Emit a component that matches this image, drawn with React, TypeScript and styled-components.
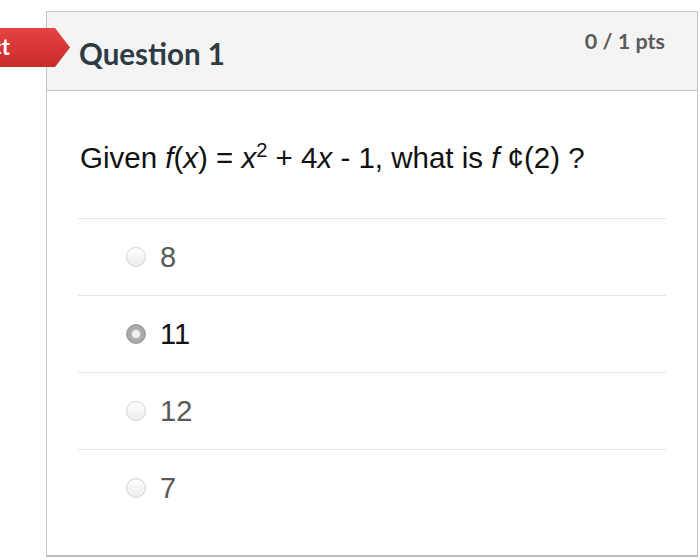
import React from "react";
import styled, { createGlobalStyle } from "styled-components";

const Global = createGlobalStyle`
  html, body { margin: 0; padding: 0; background: #ffffff; }
  body { width: 700px; height: 560px; overflow: hidden; }
`;

const Page = styled.div`
  position: relative;
  padding: 11px 0 0 46px;
`;

const Card = styled.div`
  box-sizing: border-box;
  width: 652px;
  height: 546px;
  border: 1px solid #c4c4c4;
  border-bottom: 2px solid #bdbdbd;
  background: #ffffff;
  display: flex;
  flex-direction: column;
`;

const Header = styled.div`
  box-sizing: border-box;
  height: 79px;
  background: #f4f4f4;
  border-bottom: 1px solid #c4c4c4;
  display: flex;
  justify-content: space-between;
  align-items: flex-start;
  padding: 0 32px 0 32px;
`;

const Title = styled.h2`
  margin: 0;
  padding-top: 27px;
  font-family: Lato, "Noto Sans", sans-serif;
  font-weight: 700;
  font-size: 29.5px;
  line-height: 1;
  color: #2d3b45;
`;

const Points = styled.div`
  padding-top: 19px;
  font-family: Lato, "Noto Sans", sans-serif;
  font-weight: 700;
  font-size: 21.5px;
  line-height: 1;
  color: #5a5a5a;
`;

const Tag = styled.div`
  position: absolute;
  left: -150px;
  top: 28px;
  width: 220px;
  height: 39px;
  box-sizing: border-box;
  padding-right: 60px;
  text-align: right;
  white-space: nowrap;
  background: linear-gradient(#e54343, #c92a2a);
  clip-path: polygon(0 0, calc(100% - 15px) 0, 100% 50%, calc(100% - 15px) 100%, 0 100%);
  font-family: Lato, "Noto Sans", sans-serif;
  font-weight: 700;
  font-size: 22px;
  line-height: 37px;
  color: #ffffff;
`;

const Body = styled.div`
  padding: 0 31px;
`;

const QuestionText = styled.div`
  margin: 52px 0 0 2px;
  font-family: "Liberation Sans", Arial, sans-serif;
  font-size: 29.5px;
  line-height: 29px;
  color: #111111;

  i { font-style: italic; }
  sup {
    font-size: 0.68em;
    line-height: 0;
    vertical-align: 0.55em;
  }
`;

const AnswerList = styled.div`
  margin-top: 46px;
`;

const Answer = styled.div`
  box-sizing: border-box;
  height: 77px;
  border-top: 1px solid #e6e6e6;
  display: flex;
  align-items: center;
  padding-left: 48px;
  gap: 14px;
`;

const Radio = styled.span<{ $checked?: boolean }>`
  box-sizing: border-box;
  width: 20px;
  height: 20px;
  border-radius: 50%;
  flex: none;
  border: 1px solid ${(p) => (p.$checked ? "#9a9a9a" : "#d2d2d2")};
  background: ${(p) =>
    p.$checked
      ? "radial-gradient(circle, #f2f2f2 0 3.5px, #b4b4b4 4.5px, #a2a2a2 9px)"
      : "linear-gradient(#ffffff, #ececec)"};
`;

const Label = styled.span<{ $checked?: boolean }>`
  font-family: "Liberation Sans", Arial, sans-serif;
  font-size: 29px;
  line-height: 1;
  color: ${(p) => (p.$checked ? "#111111" : "#5a5a5a")};
`;

const answers = [
  { text: "8", checked: false },
  { text: "11", checked: true },
  { text: "12", checked: false },
  { text: "7", checked: false },
];

export default function App() {
  return (
    <>
      <Global />
      <Page>
        <Tag>Incorrect</Tag>
        <Card>
          <Header>
            <Title>Question 1</Title>
            <Points>0 / 1 pts</Points>
          </Header>
          <Body>
            <QuestionText>
              Given <i>f</i>(<i>x</i>) = <i>x</i>
              <sup>2</sup> + 4<i>x</i> - 1, what is <i>f</i> ¢(2) ?
            </QuestionText>
            <AnswerList>
              {answers.map((a) => (
                <Answer key={a.text}>
                  <Radio $checked={a.checked} />
                  <Label $checked={a.checked}>{a.text}</Label>
                </Answer>
              ))}
            </AnswerList>
          </Body>
        </Card>
      </Page>
    </>
  );
}
